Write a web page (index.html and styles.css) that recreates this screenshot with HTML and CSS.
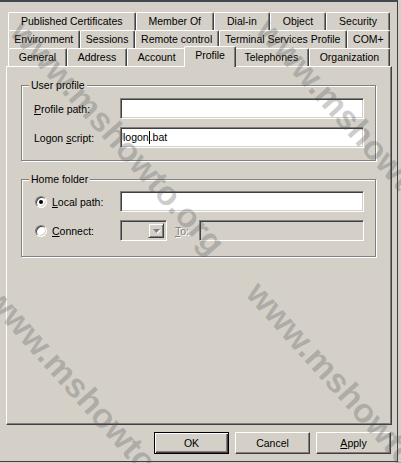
FILE: index.html
```html
<!DOCTYPE html>
<html lang="en">
<head>
    <meta charset="UTF-8">
    <title>Properties - Profile</title>
    <link rel="stylesheet" href="styles.css">
</head>
<body>
    <div class="dialog">
        <div class="tabs">
            <div class="tab-row">
                <div class="tab">Published Certificates</div>
                <div class="tab">Member Of</div>
                <div class="tab">Dial-in</div>
                <div class="tab">Object</div>
                <div class="tab">Security</div>
            </div>
            <div class="tab-row">
                <div class="tab">Environment</div>
                <div class="tab">Sessions</div>
                <div class="tab">Remote control</div>
                <div class="tab">Terminal Services Profile</div>
                <div class="tab">COM+</div>
            </div>
            <div class="tab-row">
                <div class="tab">General</div>
                <div class="tab">Address</div>
                <div class="tab">Account</div>
                <div class="tab active">Profile</div>
                <div class="tab">Telephones</div>
                <div class="tab">Organization</div>
            </div>
        </div>

        <div class="panel">
            <div class="group group-profile">
                <div class="group-title">User profile</div>
                <div class="field-row">
                    <span class="field-label"><u>P</u>rofile path:</span>
                    <div class="textbox"></div>
                </div>
                <div class="field-row">
                    <span class="field-label">Logon <u>s</u>cript:</span>
                    <div class="textbox">logon<span class="caret"></span>.bat</div>
                </div>
            </div>

            <div class="group group-home">
                <div class="group-title">Home folder</div>
                <div class="field-row">
                    <span class="radio checked"></span>
                    <span class="radio-label"><u>L</u>ocal path:</span>
                    <div class="textbox"></div>
                </div>
                <div class="field-row">
                    <span class="radio"></span>
                    <span class="radio-label"><u>C</u>onnect:</span>
                    <div class="combo">
                        <span class="combo-btn">
                            <svg width="7" height="4" viewBox="0 0 7 4"><path d="M0 0h7L3.5 4z" fill="#808080"/></svg>
                        </span>
                    </div>
                    <span class="to-label"><u>T</u>o:</span>
                    <div class="textbox disabled"></div>
                </div>
            </div>
        </div>

        <div class="buttons">
            <button class="btn default">OK</button>
            <button class="btn">Cancel</button>
            <button class="btn"><u>A</u>pply</button>
        </div>
    </div>

    <div class="watermark">
        <span class="mark mark-a">www.mshowto.org</span>
        <span class="mark mark-b">www.mshowto.org</span>
        <span class="mark mark-c">www.mshowto.org</span>
        <span class="mark mark-d">www.mshowto.org</span>
    </div>
</body>
</html>
```

FILE: styles.css
```css
* {
    margin: 0;
    padding: 0;
    box-sizing: border-box;
}

body {
    width: 401px;
    height: 463px;
    background: #d4d0c8;
    font-family: "Liberation Sans", Arial, sans-serif;
    font-size: 10.5px;
    color: #000;
    position: relative;
    overflow: hidden;
}

u {
    text-decoration: underline;
    text-underline-offset: 1px;
}

.dialog {
    width: 398px;
    height: 462px;
    border-top: 2px solid #404850;
    border-right: 1px solid #404040;
    border-bottom: 1px solid #404040;
    padding: 10px 5px 0 6px;
    display: flex;
    flex-direction: column;
}

/* tab strip */
.tabs {
    display: flex;
    flex-direction: column;
}

.tab-row {
    display: flex;
    height: 18px;
    margin: 0 2px;
}

.tab {
    flex: 1 1 auto;
    height: 18px;
    padding: 0 4px;
    border: 1px solid;
    border-bottom: none;
    border-color: #fff #404040 #fff #fff;
    border-radius: 2px 2px 0 0;
    box-shadow: inset -1px 0 #808080;
    background: #d4d0c8;
    line-height: 16px;
    text-align: center;
    white-space: nowrap;
}

.tab.active {
    position: relative;
    z-index: 1;
    height: 21px;
    margin: -2px -2px -1px;
}

/* page body */
.panel {
    height: 359px;
    border: 1px solid;
    border-color: #fff #404040 #404040 #fff;
    box-shadow: inset -1px -1px #808080;
    padding: 18px 15px 0 14px;
}

.group {
    position: relative;
    border: 1px solid #808080;
    box-shadow: inset 1px 1px #fff, 1px 1px #fff;
    padding: 12px 11px 12px 12px;
}

.group-home {
    margin-top: 18px;
    padding: 11px 11px 15px 12px;
}

.group-title {
    position: absolute;
    top: -7px;
    left: 7px;
    padding: 0 2px;
    background: #d4d0c8;
    line-height: 12px;
}

.field-row {
    display: flex;
    align-items: center;
    height: 21px;
}

.field-row + .field-row {
    margin-top: 8px;
}

.field-label {
    width: 86px;
    flex: none;
}

.textbox {
    flex: 1;
    height: 21px;
    background: #fff;
    border: 1px solid;
    border-color: #808080 #fff #fff #808080;
    box-shadow: inset 1px 1px #404040, inset -1px -1px #d4d0c8;
    padding: 0 2px;
    line-height: 19px;
    white-space: nowrap;
}

.textbox.disabled {
    background: #d4d0c8;
}

.caret {
    display: inline-block;
    width: 1px;
    height: 13px;
    background: #000;
    vertical-align: -3px;
}

/* radio buttons */
.radio {
    position: relative;
    width: 12px;
    height: 12px;
    margin-left: 1px;
    margin-right: 5px;
    flex: none;
    border-radius: 50%;
    background: #fff;
    border: 1px solid;
    border-color: #808080 #fff #fff #808080;
    box-shadow: inset 1px 1px #404040, inset -1px -1px #d4d0c8;
}

.radio.checked::after {
    content: "";
    position: absolute;
    left: 3px;
    top: 3px;
    width: 4px;
    height: 4px;
    border-radius: 50%;
    background: #000;
}

.radio-label {
    width: 68px;
    flex: none;
}

/* disabled combo */
.combo {
    width: 47px;
    height: 21px;
    flex: none;
    display: flex;
    justify-content: flex-end;
    padding: 2px;
    border: 1px solid;
    border-color: #808080 #fff #fff #808080;
    box-shadow: inset 1px 1px #404040, inset -1px -1px #d4d0c8;
}

.combo-btn {
    width: 16px;
    height: 15px;
    display: flex;
    align-items: center;
    justify-content: center;
    border: 1px solid;
    border-color: #d4d0c8 #404040 #404040 #d4d0c8;
    box-shadow: inset 1px 1px #fff, inset -1px -1px #808080;
}

.combo-btn svg {
    filter: drop-shadow(1px 1px 0 #fff);
}

.to-label {
    width: 24px;
    margin-left: 8px;
    flex: none;
    color: #808080;
    text-shadow: 1px 1px 0 #fff;
}

/* buttons */
.buttons {
    display: flex;
    justify-content: flex-end;
    gap: 6px;
    margin-top: 7px;
    padding-right: 1px;
}

.btn {
    width: 75px;
    height: 22px;
    font: inherit;
    color: #000;
    background: #d4d0c8;
    border: 1px solid;
    border-color: #fff #404040 #404040 #fff;
    box-shadow: inset -1px -1px #808080;
}

.btn.default {
    border: 1px solid #000;
    box-shadow: inset 1px 1px #fff, inset -1px -1px #404040, inset -2px -2px #808080;
}

/* watermark over the dialog */
.watermark {
    position: absolute;
    inset: 0;
    overflow: hidden;
    pointer-events: none;
}

.mark {
    position: absolute;
    font-weight: bold;
    font-size: 34px;
    line-height: 1;
    white-space: nowrap;
    color: rgba(80, 80, 80, 0.28);
    transform: rotate(48deg);
    transform-origin: 0 0;
}

.mark-a { left: 276px; top: 12px; }
.mark-b { left: 30px; top: 14px; }
.mark-c { left: 266px; top: 275px; }
.mark-d { left: 5px; top: 280px; }
```
